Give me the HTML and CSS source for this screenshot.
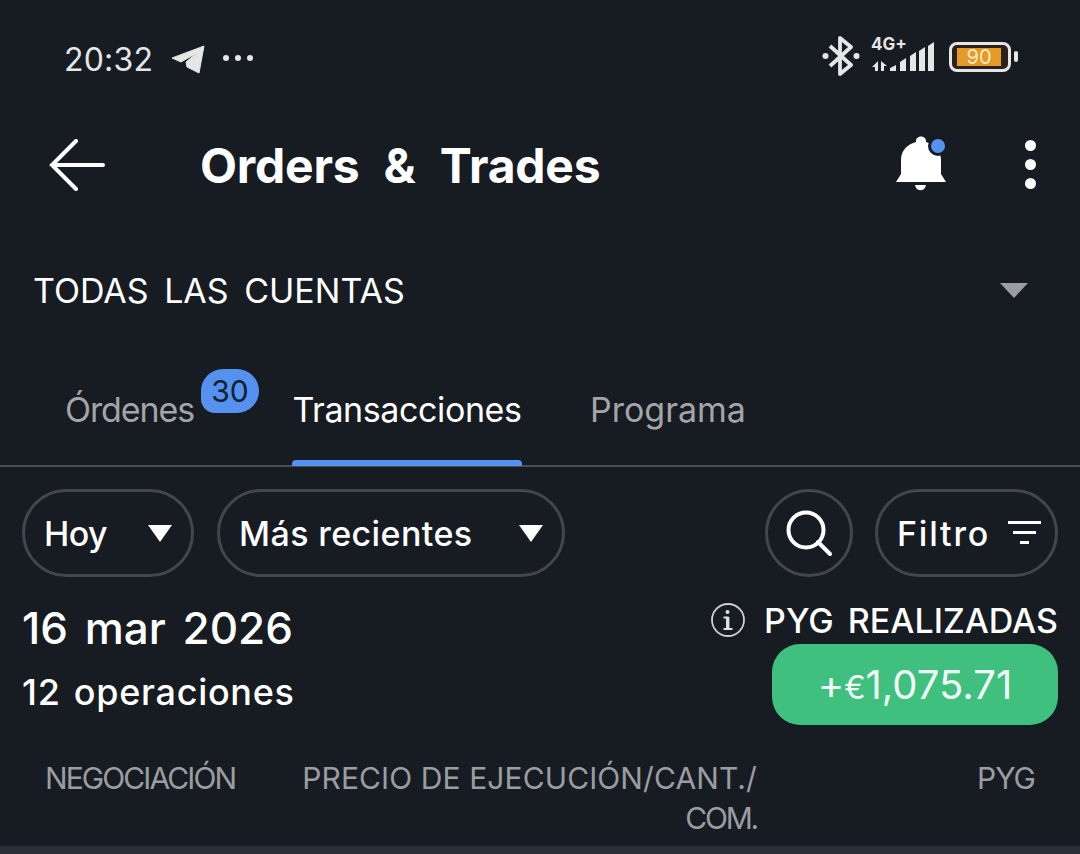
FILE: index.html

```html
<!DOCTYPE html>
<html lang="es">
<head>
    <meta charset="UTF-8">
    <meta name="viewport" content="width=device-width, initial-scale=1.0">
    <title>Orders &amp; Trades</title>
    <link rel="stylesheet" href="styles.css">
</head>
<body>
    <div class="screen">
        <div class="status-bar">
            <div class="status-left">
                <span class="clock">20:32</span>
                <svg class="tg-icon" width="34" height="30" viewBox="0 0 34 30"><path d="M33 1 28 28 16 22 15 17 26 8 10 17 1 13Z" fill="#e6e6e6" stroke="#e6e6e6" stroke-width="1" stroke-linejoin="round"/></svg>
                <svg class="dots-icon" width="32" height="8" viewBox="0 0 32 8"><circle cx="4" cy="4" r="3" fill="#e6e6e6"/><circle cx="16" cy="4" r="3" fill="#e6e6e6"/><circle cx="28" cy="4" r="3" fill="#e6e6e6"/></svg>
            </div>
            <div class="status-right">
                <svg class="bt-icon" width="38" height="40" viewBox="0 0 38 40" fill="none" stroke="#e6e6e6" stroke-width="3.8" stroke-linejoin="round"><path d="M8 10 29 29 18 38V2L29 11 8 30"/><circle cx="3.5" cy="20" r="3" fill="#e6e6e6" stroke="none"/><circle cx="34.5" cy="20" r="3" fill="#e6e6e6" stroke="none"/></svg>
                <div class="signal">
                    <span class="net">4G+</span>
                    <svg width="64" height="30" viewBox="0 0 64 30" fill="#e6e6e6"><path d="M1 25 7 19V29H4V25ZM10 19 16 24H13V29H10Z"/><path d="M19 29V26L25 23V29Z"/><path d="M29 29V20L35 16V29Z"/><path d="M39 29V14L45 10V29Z"/><path d="M48 29V9L54 5V29Z"/><path d="M57 29V4L63 0V29Z"/></svg>
                </div>
                <div class="battery">
                    <div class="battery-body"><span class="battery-fill">90</span></div>
                    <span class="battery-cap"></span>
                </div>
            </div>
        </div>

        <div class="toolbar">
            <svg class="back-icon" width="56" height="52" viewBox="0 0 56 52" fill="none" stroke="#fff" stroke-width="4" stroke-linecap="round"><path d="M54 26H3M27 2 3 26 27 50"/></svg>
            <h1 class="page-title">Orders &amp; Trades</h1>
            <svg class="bell-icon" width="52" height="56" viewBox="0 0 52 56"><path d="M0 46 5 38V24C5 14 12 8 20 6V5C20-1 30-1 30 5V6C38 8 45 14 45 24V38L50 46Z" fill="#fff"/><path d="M19 49H30C29 56 20 56 19 49Z" fill="#fff"/><circle cx="42" cy="10" r="10" fill="#171b22"/><circle cx="42" cy="10" r="7" fill="#5592ef"/></svg>
            <div class="more-icon"><span></span><span></span><span></span></div>
        </div>

        <div class="account-row">
            <span>TODAS LAS CUENTAS</span>
            <span class="account-caret"></span>
        </div>

        <div class="tabs">
            <div class="tab tab-orders">Órdenes<span class="badge">30</span></div>
            <div class="tab tab-active">Transacciones</div>
            <div class="tab tab-program">Programa</div>
        </div>

        <div class="chips">
            <div class="chip chip-hoy">Hoy<span class="caret"></span></div>
            <div class="chip chip-sort">Más recientes<span class="caret"></span></div>
            <div class="chip chip-search">
                <svg width="46" height="46" viewBox="0 0 46 46" fill="none" stroke="#fff" stroke-width="4" stroke-linecap="round"><circle cx="20" cy="20" r="17.5"/><path d="M32 32 44 44"/></svg>
            </div>
            <div class="chip chip-filter">Filtro
                <svg width="34" height="24" viewBox="0 0 34 24" fill="#fff"><rect width="33" height="3"/><rect x="5" y="10" width="23" height="3"/><rect x="12" y="20" width="9" height="3"/></svg>
            </div>
        </div>

        <div class="summary">
            <div class="summary-left">
                <div class="summary-date">16 mar 2026</div>
                <div class="summary-count">12 operaciones</div>
            </div>
            <div class="summary-right">
                <div class="pnl-label">
                    <svg width="36" height="36" viewBox="0 0 36 36"><circle cx="18" cy="18" r="16" fill="none" stroke="#d0d0d0" stroke-width="1.8"/><rect x="16" y="15" width="3.4" height="12" fill="#e0e0e0"/><rect x="13.5" y="14.5" width="5" height="2" fill="#e0e0e0"/><rect x="13.5" y="26" width="9" height="2" fill="#e0e0e0"/><circle cx="17.5" cy="10" r="2" fill="#e0e0e0"/></svg>
                    <span>PYG REALIZADAS</span>
                </div>
                <div class="pnl-value">+<span class="euro">€</span>1,075.71</div>
            </div>
        </div>

        <div class="table-head">
            <div class="col-trade">NEGOCIACIÓN</div>
            <div class="col-price">PRECIO DE EJECUCIÓN/CANT./<br><span class="col-com">COM.</span></div>
            <div class="col-pnl">PYG</div>
        </div>
        <div class="bottom-strip"></div>
    </div>
</body>
</html>
```

FILE: styles.css

```css
*{
    margin: 0px;
    padding: 0px;
    box-sizing: border-box;
}
body{
    background: #171b22;
    font-family: "Inter", "Noto Sans", sans-serif;
    color: #fff;
}
.screen{
    width: 1080px;
    height: 854px;
    display: flex;
    flex-direction: column;
    overflow: hidden;
}
.status-bar{
    height: 112px;
    padding: 0 62px 0 64px;
    display: flex;
    justify-content: space-between;
    align-items: center;
}
.status-left{
    display: flex;
    align-items: center;
    margin-top: 7px;
}
.clock{
    font-size: 32px;
    color: #e6e6e6;
    letter-spacing: 0.2px;
}
.tg-icon{
    margin-left: 18px;
}
.dots-icon{
    margin-left: 17px;
    margin-top: -3px;
}
.status-right{
    display: flex;
    align-items: center;
}
.bt-icon{
    margin-left: -2px;
}
.signal{
    width: 64px;
    margin-left: 11px;
    margin-top: 2px;
    position: relative;
    height: 30px;
    display: flex;
    flex-direction: column;
    justify-content: flex-end;
}
.net{
    position: absolute;
    left: 0;
    top: -6px;
    font-size: 17px;
    font-weight: 700;
    line-height: 17px;
    color: #e6e6e6;
}
.battery{
    margin-left: 14px;
    margin-top: 1px;
    display: flex;
    align-items: center;
    gap: 3px;
}
.battery-body{
    width: 62px;
    height: 30px;
    border: 3px solid #e6e6e6;
    border-radius: 8px;
    padding: 3px;
    background: #2a2118;
}
.battery-fill{
    display: block;
    width: 44px;
    height: 18px;
    margin-left: 2px;
    background: #e59a27;
    color: #fbe9c8;
    font-size: 20px;
    line-height: 18px;
    text-align: center;
}
.battery-cap{
    width: 4px;
    height: 11px;
    border-radius: 2px;
    background: #e6e6e6;
}
.toolbar{
    height: 106px;
    padding-left: 49px;
    display: flex;
    align-items: center;
}
.page-title{
    margin-left: 95px;
    font-size: 48px;
    font-weight: 700;
    letter-spacing: -0.2px;
    word-spacing: 13px;
}
.bell-icon{
    margin-left: auto;
    margin-top: -2px;
}
.more-icon{
    margin: -2px 44px 0 77px;
    display: flex;
    flex-direction: column;
    gap: 8px;
}
.more-icon span{
    width: 11px;
    height: 11px;
    border-radius: 50%;
    background: #fff;
}
.account-row{
    height: 144px;
    padding: 0 52px 0 33px;
    display: flex;
    justify-content: space-between;
    align-items: center;
    font-size: 34px;
    word-spacing: 6px;
}
.account-caret{
    border-left: 14px solid transparent;
    border-right: 14px solid transparent;
    border-top: 15px solid #9a9da1;
}
.tabs{
    height: 105px;
    display: flex;
    padding-top: 19px;
    border-bottom: 2px solid #4a4d54;
    font-size: 34px;
    color: #a3a5a8;
}
.tab{
    position: relative;
    height: 84px;
    padding-top: 8px;
}
.tab-orders{
    margin-left: 65px;
    width: 227px;
    letter-spacing: -1.1px;
}
.tab-active{
    width: 230px;
    color: #fff;
    text-align: center;
    letter-spacing: -0.4px;
}
.tab-active::after{
    content: "";
    position: absolute;
    left: 0;
    right: 0;
    bottom: -1px;
    height: 6px;
    border-radius: 4px 4px 0 0;
    background: #5592ef;
}
.tab-program{
    margin-left: 68px;
}
.badge{
    position: absolute;
    left: 136px;
    top: -12px;
    width: 58px;
    height: 44px;
    border-radius: 22px 22px 22px 14px;
    background: #5592ef;
    color: #14202f;
    font-size: 30px;
    line-height: 44px;
    text-align: center;
    letter-spacing: 0;
}
.chips{
    display: flex;
    padding: 22px 22px 0;
    font-size: 34px;
    font-weight: 500;
}
.chip{
    height: 88px;
    border: 3px solid #43464d;
    border-radius: 44px;
    display: flex;
    align-items: center;
    justify-content: space-between;
    padding: 0 19px;
}
.chip-hoy{
    width: 172px;
    letter-spacing: -0.6px;
}
.chip-sort{
    width: 348px;
    margin-left: 23px;
    letter-spacing: 0.4px;
}
.chip-search{
    width: 88px;
    margin-left: auto;
    justify-content: center;
    padding: 0;
}
.chip-filter{
    width: 183px;
    margin-left: 22px;
    padding-right: 13px;
    letter-spacing: 1.8px;
}
.caret{
    border-left: 12px solid transparent;
    border-right: 12px solid transparent;
    border-top: 17px solid #fff;
}
.summary{
    display: flex;
    justify-content: space-between;
    padding: 20px 22px 0;
}
.summary-date{
    font-size: 44px;
    font-weight: 500;
    margin-top: 4px;
    word-spacing: 5px;
}
.summary-count{
    font-size: 36px;
    font-weight: 500;
    margin-top: 15px;
    letter-spacing: 0.7px;
    word-spacing: 3px;
}
.summary-right{
    display: flex;
    flex-direction: column;
    align-items: flex-end;
}
.pnl-label{
    display: flex;
    align-items: center;
    gap: 18px;
    font-size: 34px;
    font-weight: 500;
    height: 46px;
    word-spacing: 5px;
}
.pnl-value{
    width: 286px;
    height: 81px;
    margin-top: 1px;
    border-radius: 28px;
    background: #3fc07e;
    font-size: 40px;
    line-height: 81px;
    text-align: center;
    color: #f2fff8;
}
.euro{
    font-size: 32px;
}
.table-head{
    display: flex;
    padding: 33px 45px 0;
    height: 121px;
    font-size: 30px;
    line-height: 40px;
    color: #9a9da1;
}
.col-trade{
    width: 257px;
    letter-spacing: -1.9px;
}
.col-price{
    width: 455px;
    text-align: right;
    letter-spacing: 0.1px;
}
.col-com{
    letter-spacing: -2.2px;
}
.col-pnl{
    margin-left: auto;
    letter-spacing: -1px;
}
.bottom-strip{
    height: 8px;
    background: #2a2e36;
}
```
